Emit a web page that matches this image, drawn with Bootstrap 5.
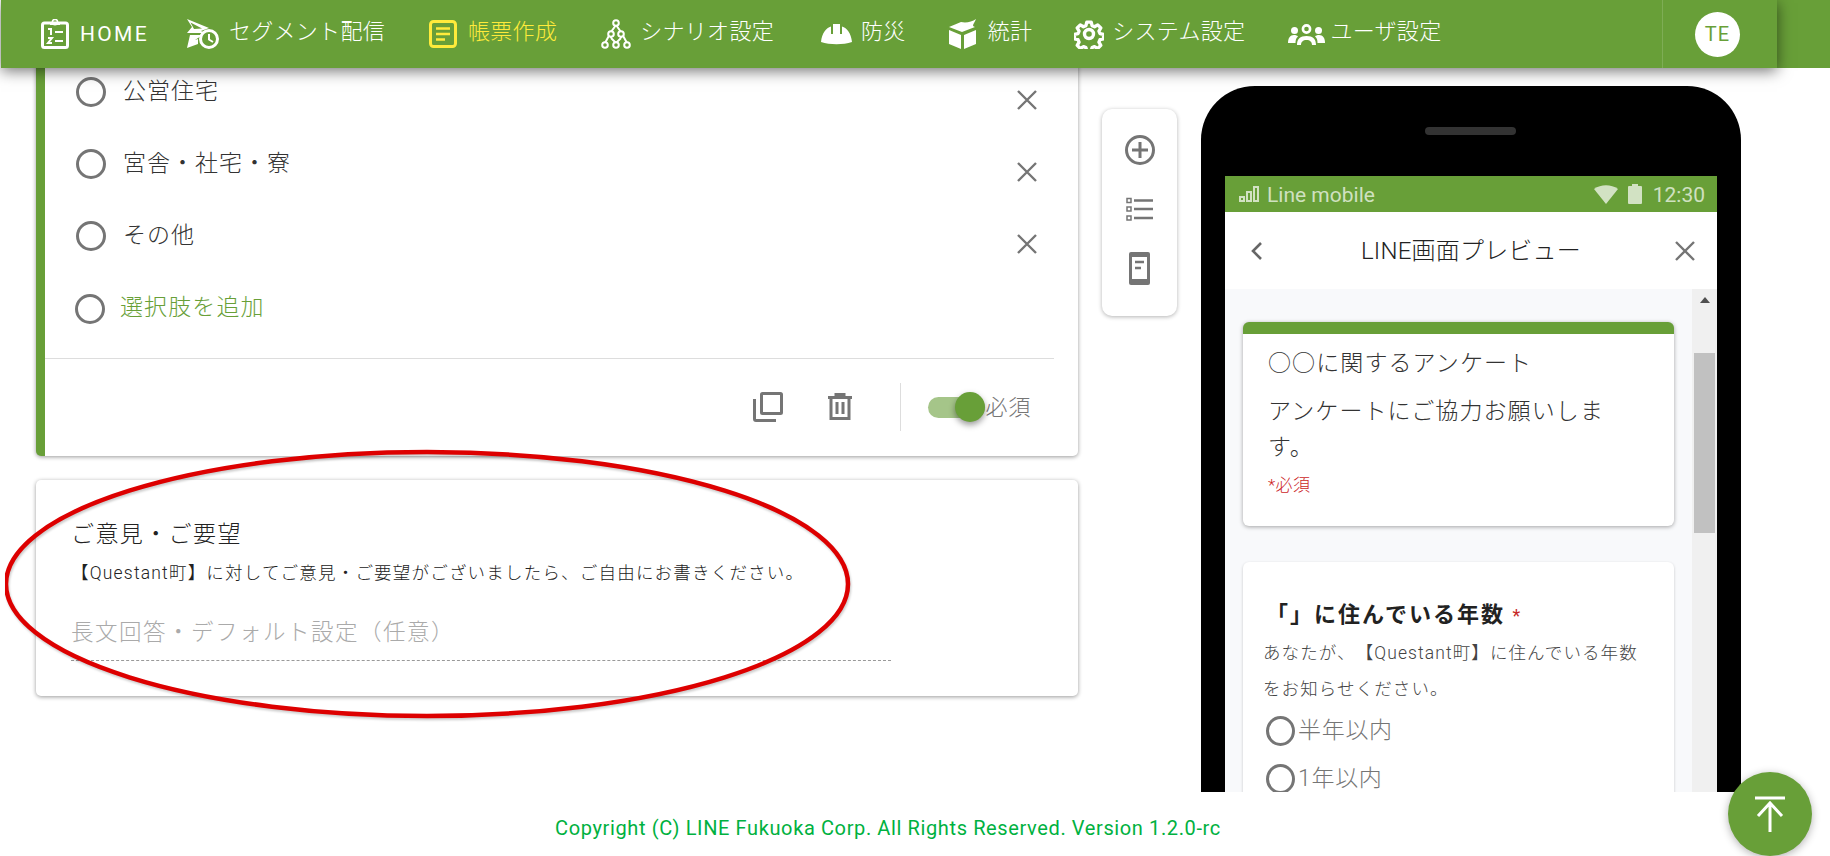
<!DOCTYPE html>
<html lang="ja">
<head>
<meta charset="utf-8">
<title>帳票作成</title>
<link href="https://cdn.jsdelivr.net/npm/bootstrap@5.3.0/dist/css/bootstrap.min.css" rel="stylesheet">
<style>
html,body{height:856px;overflow:hidden;}
body{background:#fff;font-family:Roboto,"Noto Sans CJK JP",sans-serif;font-weight:300;color:#333;display:flex;flex-direction:column;text-spacing-trim:space-all;}
.topbar{height:68px;background:#689f38;flex:none;position:relative;z-index:10;margin-left:1px;}
.topbar-inner{width:1776px;height:68px;background:#689f38;box-shadow:0 3px 14px rgba(0,0,0,.55);padding:0 37px 0 40px;}
.menu-item{color:#fff;font-size:22px;letter-spacing:.3px;gap:11px;white-space:nowrap;line-height:1;font-weight:300;}
.menu-item>span{padding-bottom:4px;}
.menu-item .latin{font-size:21px;letter-spacing:2.3px;font-weight:400;padding-bottom:0;}
.menu-item.is-current{color:#ffeb3b;}
.menu-list{gap:43px;}
.seg-item{gap:10px;margin-left:-5px;}
.shift-a{margin-left:1px;}
.shift-e{margin-left:1px;gap:9px;}
.shift-b{margin-left:4px;gap:9px;}
.shift-c{margin-left:-1px;gap:8px;}
.shift-d{gap:5px;}
.menu-divider{width:1px;height:68px;background:rgba(255,255,255,.15);margin-right:32px;}
.avatar{width:45px;height:45px;background:#fff;color:#689f38;font-size:20px;letter-spacing:1px;font-weight:400;}
.stage{flex:1 1 auto;height:724px;overflow:hidden;position:relative;}
.left-col{width:1042px;margin-left:36px;flex:none;}
.panel{background:#fff;border:0;border-radius:5px;box-shadow:0 1px 4px rgba(0,0,0,.4);}
.panel-main{margin-top:-12px;border-left:9px solid #689f38;height:400px;}
.option-row{height:72px;padding:0 39px 0 31px;gap:17px;font-size:23px;letter-spacing:1px;}
.option-row .close-x{margin-left:auto;margin-top:16px;}
.ring{width:30px;height:30px;border:3px solid #757575;border-radius:50%;flex:none;display:block;}
.add-row{padding:1px 39px 0 30px;gap:15px;color:#689f38;letter-spacing:1.1px;}
.rule{height:1px;background:#ddd;margin:14px 24px 0 0;}
.panel-foot{height:96px;padding-right:47px;}
.panel-foot .trash-ico{margin-left:45px;}
.foot-sep{width:1px;height:48px;background:#ddd;margin:0 27px 0 48px;}
.switch-track{width:57px;height:21px;border-radius:11px;background:#a5c589;position:relative;display:block;}
.switch-thumb{width:30px;height:30px;border-radius:50%;background:#689f38;box-shadow:0 3px 6px rgba(0,0,0,.4);position:absolute;right:0;top:-5px;}
.foot-label{font-size:22px;letter-spacing:.8px;color:#757575;}
.panel-second{margin-top:24px;height:216px;padding:40px 0 0 35px;}
.q-title{font-size:23px;line-height:30px;letter-spacing:1.4px;color:#222;}
.q-sub{font-size:17.500px;line-height:24px;margin-top:11px;color:#222;font-weight:300;letter-spacing:1.2px;}
.q-place{font-size:22.500px;line-height:32px;margin-top:31px;color:#aaa;letter-spacing:1.5px;}
.q-dash{width:820px;border-top:1px dashed #999;margin-top:12px;}
.ring-mark{position:absolute;left:5px;top:381px;width:846px;height:270px;z-index:5;filter:drop-shadow(1px 2px 1px rgba(0,0,0,.2));}
.tool-rail{width:75px;height:207px;margin:41px 24px 0 24px;flex:none;background:#fff;border-radius:10px;box-shadow:0 1px 4px rgba(0,0,0,.3);padding-top:25px;gap:25px;}
.phone{width:540px;height:760px;background:#000;margin-top:18px;flex:none;border-radius:54px 54px 0 0;padding:90px 24px 0;position:relative;}
.speaker{position:absolute;left:224px;top:41px;width:91px;height:8px;border-radius:4px;background:#333;}
.status-bar{height:36px;background:#689f38;padding:0 12px 0 14px;color:rgba(255,255,255,.7);font-size:21px;font-weight:400;line-height:1;}
.status-bar>span{padding-top:2px;}
.status-batt{margin-left:10px;}
.status-clock{font-size:21px;margin-left:11px;}
.phone-head{height:77px;background:#fff;padding:0 21px 0 26px;font-size:24px;color:#222;letter-spacing:.2px;}
.phone-head>span{margin-left:5px;}
.phone-body{height:560px;background:#f8f9fb;}
.phone-scroll{width:467px;flex:none;padding:33px 18px 0;}
.scroll-rail{width:25px;flex:none;background:#f0f0f0;padding:8px 2px 0;}
.scroll-up{width:0;height:0;border-left:5px solid transparent;border-right:5px solid transparent;border-bottom:6px solid #505050;margin:0 auto 50px;}
.scroll-thumb{height:180px;background:#c1c1c1;}
.m-card{background:#fff;border-radius:6px;box-shadow:0 1px 4px rgba(0,0,0,.35);overflow:hidden;}
.m-card-a{height:204px;border-top:12px solid #689f38;padding:12px 60px 0 25px;font-size:23px;letter-spacing:1.1px;line-height:36px;}
.m-title{margin-bottom:12px;}
.m-req{color:#cc1f1f;font-size:17px;letter-spacing:.4px;line-height:22px;margin-top:8px;font-weight:300;}
.m-card-b{margin-top:36px;height:300px;padding:36px 24px 0 20px;box-shadow:0 1px 3px rgba(0,0,0,.2);}
.m-q{font-size:22px;font-weight:700;color:#222;line-height:34px;letter-spacing:2px;padding-left:3px;}
.m-q span{color:#c62828;font-size:18px;font-weight:400;}
.m-desc{font-size:17.500px;line-height:36px;color:#444;font-weight:300;margin-top:2px;letter-spacing:1.1px;}
.m-opt{height:48px;gap:3px;color:#757575;font-size:23px;letter-spacing:.7px;padding-left:3px;}
.m-ring{width:29px;height:30px;border:3px solid #757575;border-radius:50%;display:block;flex:none;}
.page-foot{height:64px;flex:none;background:#fff;color:#00b140;font-size:20px;font-weight:400;letter-spacing:.62px;position:relative;z-index:6;padding:7px 54px 0 0;}
.top-fab{position:fixed;left:1728px;top:772px;width:84px;height:84px;background:#689f38;z-index:20;box-shadow:0 2px 8px rgba(0,0,0,.3);}
</style>
</head>
<body>
<nav class="topbar">
  <div class="topbar-inner d-flex align-items-center justify-content-between">
    <div class="d-flex align-items-center menu-list">
      <div class="menu-item d-flex align-items-center">
        <svg width="28" height="30" viewBox="0 0 28 30"><rect x="1.5" y="4" width="25" height="24.5" rx="2" fill="none" stroke="#fff" stroke-width="3"/><circle cx="14" cy="3" r="2.6" fill="none" stroke="#fff" stroke-width="1.6"/><rect x="9" y="3" width="10" height="3" fill="#fff"/><path d="M7 10h3v6M7 19h4l-4 5h4M14 13h8M14 22h8" fill="none" stroke="#fff" stroke-width="2"/></svg>
        <span class="latin">HOME</span>
      </div>
      <div class="menu-item seg-item d-flex align-items-center">
        <svg width="32" height="30" viewBox="0 0 32 30"><path d="M0 0 22 9 14 12 18 14 0 14 5 8ZM3.500 3.500 7 10 15 9.500ZM0 29 3 16 16 16 11 19 8 21 11 20 11 25Z" fill="#fff"/><circle cx="22" cy="20" r="8.500" fill="#689f38" stroke="#fff" stroke-width="3"/><path d="M22 15v5.500l4 2.500" fill="none" stroke="#fff" stroke-width="2"/></svg>
        <span>セグメント配信</span>
      </div>
      <div class="menu-item is-current shift-a d-flex align-items-center">
        <svg width="28" height="28" viewBox="0 0 28 28"><rect x="1.500" y="1.500" width="25" height="25" rx="3" fill="none" stroke="#ffeb3b" stroke-width="3"/><path d="M7 8.500h14M7 14h14M7 19.500h9" stroke="#ffeb3b" stroke-width="2.600"/></svg>
        <span>帳票作成</span>
      </div>
      <div class="menu-item shift-e d-flex align-items-center">
        <svg width="30" height="30" viewBox="0 0 30 30" fill="none" stroke="#fff" stroke-width="2"><path d="M15 6 10 13 4 24M15 6l5 7 6 11M10 19l5 5M20 19l-5 5M10 13v6M20 13v6"/><circle cx="15" cy="4" r="2.800" fill="#689f38"/><circle cx="10" cy="15" r="2.800" fill="#689f38"/><circle cx="20" cy="15" r="2.800" fill="#689f38"/><circle cx="4" cy="26" r="2.800" fill="#689f38"/><circle cx="15" cy="26" r="2.800" fill="#689f38"/><circle cx="26" cy="26" r="2.800" fill="#689f38"/></svg>
        <span>シナリオ設定</span>
      </div>
      <div class="menu-item shift-b d-flex align-items-center">
        <svg width="31" height="21" viewBox="0 0 31 21"><path d="M0 18C1 9 5 4 10 2.500V10h2V0h7v10h2V2.500C26 4 30 9 31 18 22 21 9 21 0 18Z" fill="#fff"/></svg>
        <span>防災</span>
      </div>
      <div class="menu-item d-flex align-items-center">
        <svg width="28" height="30" viewBox="0 0 28 30"><path d="M0 8 12 3C17 4 23 3 27 0 25 5 22 7 26 8L13 13ZM0 11 12 16V30L0 25ZM15 16 27 11V25L15 30Z" fill="#fff"/></svg>
        <span>統計</span>
      </div>
      <div class="menu-item shift-c d-flex align-items-center">
        <svg width="30" height="30" viewBox="0 0 30 30"><path d="M12.500 1.500h5l1 4 2.800 1.200 3.600-2.100 3.500 3.500-2.100 3.600 1.200 2.800 4 1v5l-4 1-1.200 2.800 2.100 3.600-3.500 3.500-3.600-2.100-2.800 1.200-1 4h-5l-1-4-2.800-1.200-3.600 2.100-3.500-3.500 2.100-3.600-1.200-2.800-4-1v-5l4-1 1.200-2.800-2.100-3.600 3.500-3.500 3.600 2.100 2.800-1.200Z" transform="translate(1.800 1.800) scale(.88)" fill="none" stroke="#fff" stroke-width="3.800" stroke-linejoin="round"/><circle cx="15" cy="15" r="4.500" fill="none" stroke="#fff" stroke-width="3.400"/></svg>
        <span>システム設定</span>
      </div>
      <div class="menu-item shift-d d-flex align-items-center">
        <svg width="37" height="21" viewBox="0 0 37 21"><circle cx="18.500" cy="5" r="3.600" fill="none" stroke="#fff" stroke-width="2.600"/><circle cx="6.500" cy="6.500" r="3.500" fill="#fff"/><circle cx="30.500" cy="6.500" r="3.500" fill="#fff"/><path d="M0 19c0-5 2-8 6-8 2 0 3 .5 4 1.500C8 14 7.500 16 7.500 19ZM37 19c0-5-2-8-6-8-2 0-3 .5-4 1.500 2 1.500 2.500 3.500 2.500 6.500Z" fill="#fff"/><path d="M9 21c0-6 3-9 9.500-9S28 15 28 21h-4c0-3-2-5-5.500-5S13 18 13 21Z" fill="#fff"/></svg>
        <span>ユーザ設定</span>
      </div>
    </div>
    <div class="d-flex align-items-center">
      <div class="menu-divider"></div>
      <div class="avatar rounded-circle d-flex align-items-center justify-content-center">TE</div>
    </div>
  </div>
</nav>

<main class="stage d-flex">
  <div class="left-col">
    <div class="panel panel-main">
      <div class="option-row d-flex align-items-center"><i class="ring"></i><span>公営住宅</span>
        <svg class="close-x" width="24" height="24" viewBox="0 0 24 24"><path d="M3 3 21 21M21 3 3 21" stroke="#757575" stroke-width="2.400"/></svg></div>
      <div class="option-row d-flex align-items-center"><i class="ring"></i><span>宮舎・社宅・寮</span>
        <svg class="close-x" width="24" height="24" viewBox="0 0 24 24"><path d="M3 3 21 21M21 3 3 21" stroke="#757575" stroke-width="2.400"/></svg></div>
      <div class="option-row d-flex align-items-center"><i class="ring"></i><span>その他</span>
        <svg class="close-x" width="24" height="24" viewBox="0 0 24 24"><path d="M3 3 21 21M21 3 3 21" stroke="#757575" stroke-width="2.400"/></svg></div>
      <div class="option-row add-row d-flex align-items-center"><i class="ring"></i><span>選択肢を追加</span></div>
      <div class="rule"></div>
      <div class="panel-foot d-flex align-items-center justify-content-end">
        <svg width="30" height="30" viewBox="0 0 30 30" fill="none" stroke="#757575" stroke-width="3"><rect x="8.500" y="1.500" width="20" height="20" rx="1"/><path d="M1.500 7v20a1.500 1.500 0 0 0 1.500 1.500h20"/></svg>
        <svg class="trash-ico" width="24" height="28" viewBox="0 0 24 28" fill="none" stroke="#757575" stroke-width="3"><path d="M0 4.500h24M8 4V1.500h8V4M3 5v20.500h18V5M9 9v12M15 9v12"/></svg>
        <div class="foot-sep"></div>
        <span class="switch-track"><span class="switch-thumb"></span></span>
        <span class="foot-label">必須</span>
      </div>
    </div>
    <div class="panel panel-second">
      <div class="q-title">ご意見・ご要望</div>
      <div class="q-sub">【Questant町】に対してご意見・ご要望がございましたら、ご自由にお書きください。</div>
      <div class="q-place">長文回答・デフォルト設定（任意）</div>
      <div class="q-dash"></div>
    </div>
  </div>

  <svg class="ring-mark" viewBox="0 0 846 270"><ellipse cx="422" cy="135" rx="421" ry="132" fill="none" stroke="#dd0000" stroke-width="4.500"/></svg>

  <div class="tool-rail d-flex flex-column align-items-center">
    <svg width="32" height="32" viewBox="0 0 32 32" fill="none" stroke="#757575" stroke-width="3"><circle cx="16" cy="16" r="13.500"/><path d="M16 8v16M8 16h16"/></svg>
    <svg width="28" height="28" viewBox="0 0 28 24" class="mt-1" fill="none" stroke="#757575"><g stroke-width="1.500"><rect x="1" y="1.500" width="4" height="4"/><rect x="1" y="10" width="4" height="4"/><rect x="1" y="19" width="4" height="4"/></g><path d="M8 3.500h19M8 12h19M8 21h19" stroke-width="2.600"/></svg>
    <svg width="21" height="33" viewBox="0 0 21 33" class="mt-1"><rect width="21" height="33" rx="2" fill="#757575"/><rect x="3" y="5" width="15" height="22" fill="#fff"/><path d="M6 10h9M6 16h6" stroke="#757575" stroke-width="2.400"/></svg>
  </div>

  <div class="phone">
    <div class="speaker"></div>
    <div class="status-bar d-flex align-items-center">
      <svg width="20" height="16" viewBox="0 0 20 16" fill="none" stroke="rgba(255,255,255,.7)" stroke-width="2"><path d="M1 15V11H5V15ZM8 15V6H12V15ZM15 15V1H19V15Z"/></svg>
      <span class="ms-2">Line mobile</span>
      <svg class="ms-auto" width="24" height="19" viewBox="0 0 24 19"><path d="M0 4C7-1 17-1 24 4L12 19Z" fill="rgba(255,255,255,.7)"/></svg>
      <svg class="status-batt" width="14" height="20" viewBox="0 0 14 20"><path d="M4 2V0h6v2h3a1 1 0 0 1 1 1v16a1 1 0 0 1-1 1H1a1 1 0 0 1-1-1V3a1 1 0 0 1 1-1Z" fill="rgba(255,255,255,.7)"/></svg>
      <span class="status-clock">12:30</span>
    </div>
    <div class="phone-head d-flex align-items-center justify-content-between">
      <svg width="12" height="20" viewBox="0 0 12 20"><path d="M10 2 2 10 10 18" fill="none" stroke="#666" stroke-width="2.600"/></svg>
      <span>LINE画面プレビュー</span>
      <svg width="22" height="22" viewBox="0 0 22 22"><path d="M2 2 20 20M20 2 2 20" stroke="#757575" stroke-width="2.400"/></svg>
    </div>
    <div class="phone-body d-flex">
      <div class="phone-scroll">
        <div class="m-card m-card-a">
          <div class="m-title">○○に関するアンケート</div>
          <div>アンケートにご協力お願いします。</div>
          <div class="m-req">*必須</div>
        </div>
        <div class="m-card m-card-b">
          <div class="m-q">「」に住んでいる年数 <span>*</span></div>
          <div class="m-desc">あなたが、【Questant町】に住んでいる年数をお知らせください。</div>
          <div class="m-opt d-flex align-items-center"><i class="m-ring"></i><span>半年以内</span></div>
          <div class="m-opt d-flex align-items-center"><i class="m-ring"></i><span>1年以内</span></div>
        </div>
      </div>
      <div class="scroll-rail">
        <div class="scroll-up"></div>
        <div class="scroll-thumb"></div>
      </div>
    </div>
  </div>
</main>

<footer class="page-foot d-flex align-items-center justify-content-center">
  <span>Copyright (C) LINE Fukuoka Corp. All Rights Reserved. Version 1.2.0-rc</span>
</footer>
<div class="top-fab rounded-circle d-flex align-items-center justify-content-center">
  <svg width="32" height="36" viewBox="0 0 32 36" fill="none" stroke="#fff" stroke-width="3"><path d="M1 2h30M16 36V7M4 20 16 7l12 13"/></svg>
</div>
<script src="https://cdn.jsdelivr.net/npm/bootstrap@5.3.0/dist/js/bootstrap.bundle.min.js"></script>
</body>
</html>
